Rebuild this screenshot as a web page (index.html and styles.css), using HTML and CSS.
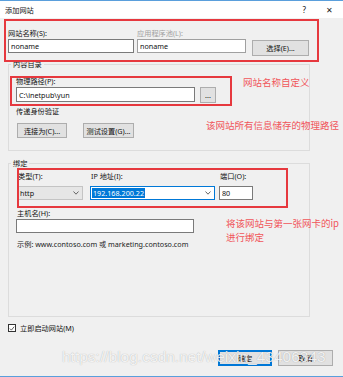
FILE: index.html
```html
<!DOCTYPE html>
<html lang="zh-CN">
<head>
  <meta charset="UTF-8" />
  <title>添加网站</title>
  <link rel="stylesheet" href="styles.css">
</head>
<body>
  <div class="window">
    <!-- Title bar -->
    <div class="titlebar">
      <span class="title">添加网站</span>
      <span class="help">?</span>
      <span class="close">✕</span>
    </div>

    <div class="dialog-body">
      <!-- Site name row -->
      <div class="name-row">
        <div class="field name-field">
          <label class="field-label">网站名称(S):</label>
          <input class="text" value="noname">
        </div>
        <div class="field pool-field">
          <label class="field-label disabled">应用程序池(L):</label>
          <input class="text" value="noname" readonly>
        </div>
        <button class="btn select-btn">选择(E)...</button>
      </div>

      <!-- Content directory -->
      <fieldset class="group content-group">
        <legend>内容目录</legend>
        <label class="field-label">物理路径(P):</label>
        <div class="path-row">
          <input class="text path-input" value="C:\inetpub\yun">
          <button class="btn browse-btn">...</button>
        </div>
        <div class="field-label auth-label">传递身份验证</div>
        <div class="auth-row">
          <button class="btn connect-btn">连接为(C)...</button>
          <button class="btn test-btn">测试设置(G)...</button>
        </div>
      </fieldset>

      <!-- Binding -->
      <fieldset class="group binding-group">
        <legend>绑定</legend>
        <div class="binding-row">
          <div class="field type-field">
            <label class="field-label spaced">类型(T):</label>
            <div class="select">
              <span>http</span>
              <svg width="6" height="4" viewBox="0 0 6 4"><polyline points="0.5,0.5 3,3.2 5.5,0.5" fill="none" stroke="#555" stroke-width="0.9"/></svg>
            </div>
          </div>
          <div class="field ip-field">
            <label class="field-label spaced">IP 地址(I):</label>
            <div class="select editable">
              <span class="selected">192.168.200.22</span>
              <svg width="6" height="4" viewBox="0 0 6 4"><polyline points="0.5,0.5 3,3.2 5.5,0.5" fill="none" stroke="#555" stroke-width="0.9"/></svg>
            </div>
          </div>
          <div class="field port-field">
            <label class="field-label spaced">端口(O):</label>
            <input class="text" value="80">
          </div>
        </div>
        <label class="field-label host-label">主机名(H):</label>
        <input class="text host-input" value="">
        <div class="hint">示例: www.contoso.com 或 marketing.contoso.com</div>
      </fieldset>

      <label class="check-row">
        <span class="checkbox">
          <svg width="7" height="7" viewBox="0 0 7 7"><polyline points="1,3.6 2.8,5.4 6,1.4" fill="none" stroke="#333" stroke-width="0.9"/></svg>
        </span>
        立即启动网站(M)
      </label>

      <div class="footer">
        <button class="btn ok-btn default">确定</button>
        <button class="btn cancel-btn">取消</button>
      </div>
    </div>

    <!-- Annotations drawn over the dialog -->
    <div class="mark mark-name"></div>
    <div class="mark mark-path"></div>
    <div class="mark mark-binding"></div>
    <div class="note note-name">网站名称自定义</div>
    <div class="note note-path">该网站所有信息储存的物理路径</div>
    <div class="note note-binding">将该网站与第一张网卡的ip<br>进行绑定</div>
    <div class="watermark">https://blog.csdn.net/weixin_43406343</div>
  </div>
</body>
</html>
```

FILE: styles.css
```css
body {
  margin: 0;
  background: #f0f0f0;
  font-family: "Noto Sans", "Noto Sans CJK SC", sans-serif;
  font-size: 7.2px;
  color: #111;
}

.window {
  position: relative;
  width: 343px;
  height: 377px;
  box-sizing: border-box;
  border-bottom: 1px solid #5a9fdc;
  overflow: hidden;
}

.titlebar {
  height: 18px;
  box-sizing: border-box;
  border-top: 1px solid #5a9fdc;
  background: white;
  display: flex;
  align-items: center;
  padding-left: 5px;
  line-height: 10px;
}

.titlebar .help {
  margin-left: auto;
  font-size: 8px;
}

.titlebar .close {
  margin-left: 20px;
  margin-right: 10px;
  font-size: 8px;
  color: #222;
}

.dialog-body {
  padding: 10px 10px 0 8px;
}

.field {
  display: flex;
  flex-direction: column;
}

.field-label {
  display: block;
  line-height: 10px;
  margin-bottom: 1px;
}

.field-label.disabled {
  color: #a0a0a0;
}

.field-label.spaced {
  margin-bottom: 5px;
  padding-left: 1px;
}

.text {
  box-sizing: border-box;
  height: 14px;
  margin: 0;
  padding: 0 2px;
  border: 1px solid #7a7a7a;
  background: white;
  font: inherit;
  color: #111;
  outline: none;
}

.btn {
  box-sizing: border-box;
  height: 15px;
  margin: 0;
  padding: 0;
  border: 1px solid #adadad;
  background: #e1e1e1;
  font: inherit;
  color: #111;
}

.btn.default {
  border-color: #0078d7;
  box-shadow: inset 0 0 0 1px #0078d7;
}

/* site name row */
.name-row {
  display: flex;
  align-items: flex-start;
}

.name-field {
  width: 126px;
}

.pool-field {
  width: 109px;
  margin-left: 3px;
}

.pool-field .text {
  border-color: #a0a0a0;
}

.select-btn {
  width: 57px;
  height: 16px;
  margin-left: 6px;
  margin-top: 12px;
}

/* group boxes */
.group {
  width: 302px;
  box-sizing: border-box;
  margin: 0;
  border: 1px solid #dcdcdc;
}

.group legend {
  padding: 0 2px;
  margin-left: -5px;
  line-height: 10px;
}

.content-group {
  margin-top: 3px;
  padding: 7px 0 12px 7px;
}

.path-row {
  display: flex;
  align-items: flex-start;
}

.path-input {
  width: 179px;
  height: 15px;
}

.browse-btn {
  width: 16px;
  height: 16px;
  margin-left: 5px;
  line-height: 10px;
}

.auth-label {
  margin-top: 3px;
}

.auth-row {
  display: flex;
  gap: 16px;
  margin-top: 7px;
  padding-left: 1px;
}

.connect-btn {
  width: 50px;
}

.test-btn {
  width: 51px;
}

.binding-group {
  margin-top: 7px;
  padding: 3px 0 67px 7px;
}

.binding-row {
  display: flex;
  padding-left: 1px;
}

.type-field {
  width: 66px;
}

.ip-field {
  width: 125px;
  margin-left: 7px;
}

.port-field {
  width: 34px;
  margin-left: 4px;
}

.select {
  box-sizing: border-box;
  height: 14px;
  display: flex;
  align-items: center;
  justify-content: space-between;
  padding: 0 3px 0 2px;
  border: 1px solid #c4c4c4;
  background: #e6e6e6;
}

.select.editable {
  border-color: #0078d7;
  background: white;
  padding-left: 1px;
}

.select .selected {
  background: #0078d7;
  color: white;
  padding: 0 1px;
  line-height: 10px;
}

.host-label {
  margin-top: 8px;
  padding-left: 1px;
}

.host-input {
  display: block;
  width: 178px;
}

.hint {
  margin-top: 6px;
  line-height: 10px;
  padding-left: 1px;
  color: #222;
}

.check-row {
  display: flex;
  align-items: center;
  gap: 4px;
  margin-top: 6px;
  line-height: 10px;
}

.checkbox {
  box-sizing: border-box;
  width: 8px;
  height: 8px;
  border: 1px solid #333;
  background: white;
  display: flex;
  align-items: center;
  justify-content: center;
}

.footer {
  display: flex;
  justify-content: flex-end;
  gap: 6px;
  margin-top: 17px;
}

.ok-btn {
  width: 54px;
  height: 16px;
}

.cancel-btn {
  width: 55px;
  height: 16px;
}

/* red annotation boxes and notes */
.mark {
  position: absolute;
  box-sizing: border-box;
  border: 2px solid #e6383e;
}

.mark-name {
  left: 4px;
  top: 19px;
  width: 315px;
  height: 43px;
}

.mark-path {
  left: 10px;
  top: 76px;
  width: 222px;
  height: 30px;
}

.mark-binding {
  left: 17px;
  top: 168px;
  width: 271px;
  height: 40px;
}

.note {
  position: absolute;
  font-family: "Noto Sans CJK SC", sans-serif;
  font-size: 9.5px;
  line-height: 14px;
  color: #f0555a;
  white-space: nowrap;
}

.note-name {
  left: 243px;
  top: 75px;
}

.note-path {
  left: 206px;
  top: 118px;
}

.note-binding {
  left: 226px;
  top: 216px;
}

.watermark {
  position: absolute;
  left: 62px;
  top: 349px;
  font-family: "Liberation Sans", sans-serif;
  font-size: 15.5px;
  line-height: 16px;
  color: rgba(255, 255, 255, 0.85);
  text-shadow: 0 0 1px rgba(0, 0, 0, 0.3);
  white-space: nowrap;
}
```
